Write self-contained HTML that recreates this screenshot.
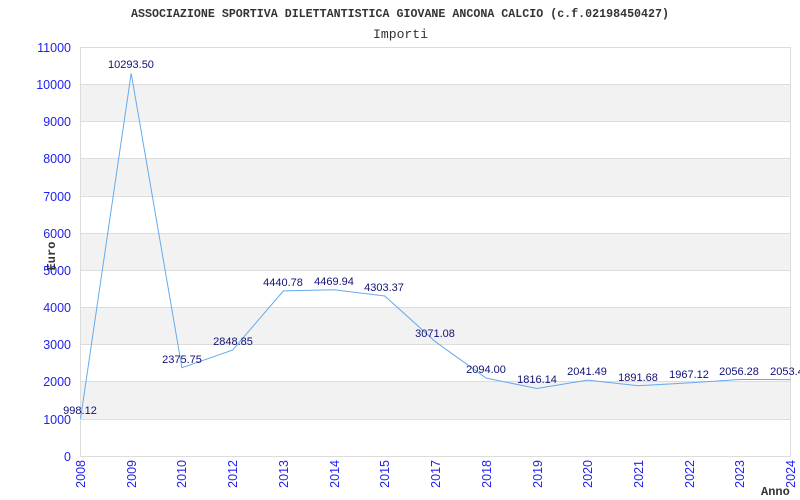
<!DOCTYPE html>
<html><head><meta charset="utf-8"><style>html,body{margin:0;padding:0;background:#fff}svg{display:block}</style></head><body>
<svg width="800" height="500" xmlns="http://www.w3.org/2000/svg">
<rect width="800" height="500" fill="#fff"/>
<g fill="#f2f2f2">
<rect x="81" y="84.2" width="709" height="37.2"/>
<rect x="81" y="158.5" width="709" height="37.2"/>
<rect x="81" y="232.9" width="709" height="37.2"/>
<rect x="81" y="307.3" width="709" height="37.2"/>
<rect x="81" y="381.6" width="709" height="37.2"/>
</g>
<g stroke="#dcdcdc" stroke-width="1">
<line x1="80" y1="47.5" x2="790" y2="47.5"/>
<line x1="80" y1="84.5" x2="790" y2="84.5"/>
<line x1="80" y1="121.5" x2="790" y2="121.5"/>
<line x1="80" y1="158.5" x2="790" y2="158.5"/>
<line x1="80" y1="196.5" x2="790" y2="196.5"/>
<line x1="80" y1="233.5" x2="790" y2="233.5"/>
<line x1="80" y1="270.5" x2="790" y2="270.5"/>
<line x1="80" y1="307.5" x2="790" y2="307.5"/>
<line x1="80" y1="344.5" x2="790" y2="344.5"/>
<line x1="80" y1="381.5" x2="790" y2="381.5"/>
<line x1="80" y1="419.5" x2="790" y2="419.5"/>
<line x1="80" y1="456.5" x2="790" y2="456.5"/>
<line x1="80.5" y1="47" x2="80.5" y2="457"/>
<line x1="790.5" y1="47" x2="790.5" y2="457"/>
</g>
<text x="131" y="17" textLength="538" lengthAdjust="spacingAndGlyphs" font-family="Liberation Mono, monospace" font-size="12" font-weight="bold" fill="#333">ASSOCIAZIONE SPORTIVA DILETTANTISTICA GIOVANE ANCONA CALCIO (c.f.02198450427)</text>
<text x="373" y="38" textLength="55" lengthAdjust="spacingAndGlyphs" font-family="Liberation Mono, monospace" font-size="13" fill="#333">Importi</text>
<g font-family="Liberation Sans, sans-serif" font-size="12.5" fill="#2222ee" text-anchor="end">
<text x="71" y="52">11000</text><text x="71" y="89">10000</text><text x="71" y="126">9000</text>
<text x="71" y="163">8000</text><text x="71" y="201">7000</text><text x="71" y="238">6000</text>
<text x="71" y="275">5000</text><text x="71" y="312">4000</text><text x="71" y="349">3000</text>
<text x="71" y="386">2000</text><text x="71" y="424">1000</text><text x="71" y="461">0</text>
</g>
<text transform="translate(55,256) rotate(-90)" text-anchor="middle" font-family="Liberation Mono, monospace" font-size="12" font-weight="bold" fill="#333">Euro</text>
<g font-family="Liberation Sans, sans-serif" font-size="12.5" fill="#2222ee" text-anchor="end">
<text transform="translate(85,460) rotate(-90)">2008</text>
<text transform="translate(136,460) rotate(-90)">2009</text>
<text transform="translate(186,460) rotate(-90)">2010</text>
<text transform="translate(237,460) rotate(-90)">2012</text>
<text transform="translate(288,460) rotate(-90)">2013</text>
<text transform="translate(339,460) rotate(-90)">2014</text>
<text transform="translate(389,460) rotate(-90)">2015</text>
<text transform="translate(440,460) rotate(-90)">2017</text>
<text transform="translate(491,460) rotate(-90)">2018</text>
<text transform="translate(542,460) rotate(-90)">2019</text>
<text transform="translate(592,460) rotate(-90)">2020</text>
<text transform="translate(643,460) rotate(-90)">2021</text>
<text transform="translate(694,460) rotate(-90)">2022</text>
<text transform="translate(744,460) rotate(-90)">2023</text>
<text transform="translate(795,460) rotate(-90)">2024</text>
</g>
<text x="761" y="495" font-family="Liberation Mono, monospace" font-size="12" font-weight="bold" fill="#333">Anno</text>
<polyline fill="none" stroke="#66aaee" stroke-width="1" points="80.5,418.9 131.2,73.3 181.9,367.7 232.6,350.1 283.4,290.9 334.1,289.8 384.8,296 435.5,341.8 486.2,378.1 536.9,388.5 587.6,380.1 638.3,385.7 689.1,382.9 739.8,379.5 790.5,379.6"/>
<g font-family="Liberation Sans, sans-serif" font-size="11" fill="#111177" text-anchor="middle">
<text x="80" y="414">998.12</text>
<text x="131" y="68">10293.50</text>
<text x="182" y="363">2375.75</text>
<text x="233" y="345">2848.85</text>
<text x="283" y="286">4440.78</text>
<text x="334" y="285">4469.94</text>
<text x="384" y="291">4303.37</text>
<text x="435" y="337">3071.08</text>
<text x="486" y="373">2094.00</text>
<text x="537" y="383">1816.14</text>
<text x="587" y="375">2041.49</text>
<text x="638" y="381">1891.68</text>
<text x="689" y="378">1967.12</text>
<text x="739" y="375">2056.28</text>
<text x="790" y="375">2053.40</text>
</g>
</svg>
</body></html>
